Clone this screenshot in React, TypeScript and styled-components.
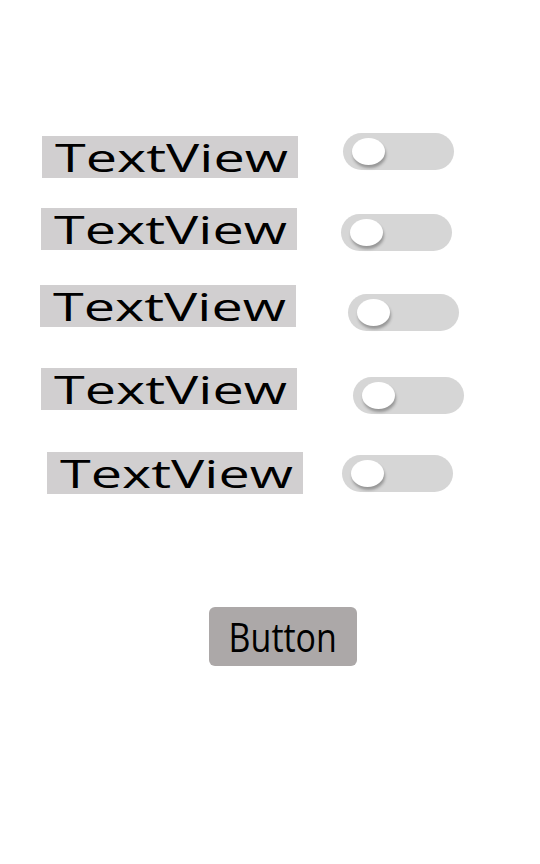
import React from 'react';
import styled, { createGlobalStyle } from 'styled-components';

type RowSpec = {
    gapTop: number;
    labelX: number;
    labelDy: number;
    switchX: number;
    switchDy: number;
};

const rows: RowSpec[] = [
    { gapTop: 0, labelX: 42, labelDy: 3, switchX: 343, switchDy: 0 },
    { gapTop: 30, labelX: 41, labelDy: 0, switchX: 341, switchDy: 6 },
    { gapTop: 34, labelX: 40, labelDy: 0, switchX: 348, switchDy: 9 },
    { gapTop: 37, labelX: 41, labelDy: 0, switchX: 353, switchDy: 9 },
    { gapTop: 38, labelX: 47, labelDy: 0, switchX: 342, switchDy: 3 },
];

const LABEL_WIDTH = 256;

const App: React.FC = () => (
    <>
        <GlobalStyle />
        <Screen>
            {rows.map((r, i) => (
                <Row key={i} $gapTop={r.gapTop} $left={r.labelX}>
                    <Label $dy={r.labelDy}>
                        <LabelText>TextView</LabelText>
                    </Label>
                    <Track $dy={r.switchDy} $dx={r.switchX - r.labelX - LABEL_WIDTH}>
                        <Thumb />
                    </Track>
                </Row>
            ))}
            <ButtonRow>
                <Button>
                    <ButtonText>Button</ButtonText>
                </Button>
            </ButtonRow>
        </Screen>
    </>
);

const GlobalStyle = createGlobalStyle`
    html, body {
        margin: 0;
        padding: 0;
        background: #ffffff;
    }
    body {
        font-family: "Open Sans", "Noto Sans", sans-serif;
    }
`;

const Screen = styled.main`
    display: flex;
    flex-direction: column;
    width: 540px;
    min-height: 864px;
    padding-top: 133px;
    box-sizing: border-box;
    background: #fff;
`;

const Row = styled.div<{ $gapTop: number; $left: number }>`
    display: flex;
    align-items: flex-start;
    margin-top: ${(p) => p.$gapTop}px;
    padding-left: ${(p) => p.$left}px;
`;

const Label = styled.div<{ $dy: number }>`
    flex: none;
    width: ${LABEL_WIDTH}px;
    height: 42px;
    margin-top: ${(p) => p.$dy}px;
    background: #d1cfd0;
    padding-left: 13px;
    box-sizing: border-box;
`;

const LabelText = styled.span`
    display: inline-block;
    font-size: 39px;
    line-height: 42px;
    color: #000;
    transform: scaleX(1.43);
    transform-origin: left center;
    white-space: nowrap;
`;

const Track = styled.div<{ $dy: number; $dx: number }>`
    position: relative;
    flex: none;
    width: 111px;
    height: 37px;
    margin-top: ${(p) => p.$dy}px;
    margin-left: ${(p) => p.$dx}px;
    border-radius: 19px;
    background: #d6d6d6;
`;

const Thumb = styled.div`
    position: absolute;
    left: 9px;
    top: 5px;
    width: 33px;
    height: 27px;
    border-radius: 50%;
    background: #fff;
    box-shadow: 1px 3px 3px rgba(0, 0, 0, 0.3);
`;

const ButtonRow = styled.div`
    display: flex;
    margin-top: 113px;
    padding-left: 209px;
`;

const Button = styled.button`
    display: flex;
    align-items: center;
    justify-content: center;
    width: 148px;
    height: 59px;
    padding: 0;
    border: none;
    border-radius: 6px;
    background: #aca8a8;
    cursor: pointer;
`;

const ButtonText = styled.span`
    display: inline-block;
    font-family: "Open Sans", "Noto Sans", sans-serif;
    font-size: 40px;
    line-height: 1;
    color: #000;
    transform: scaleX(0.85);
    white-space: nowrap;
`;

export default App;
